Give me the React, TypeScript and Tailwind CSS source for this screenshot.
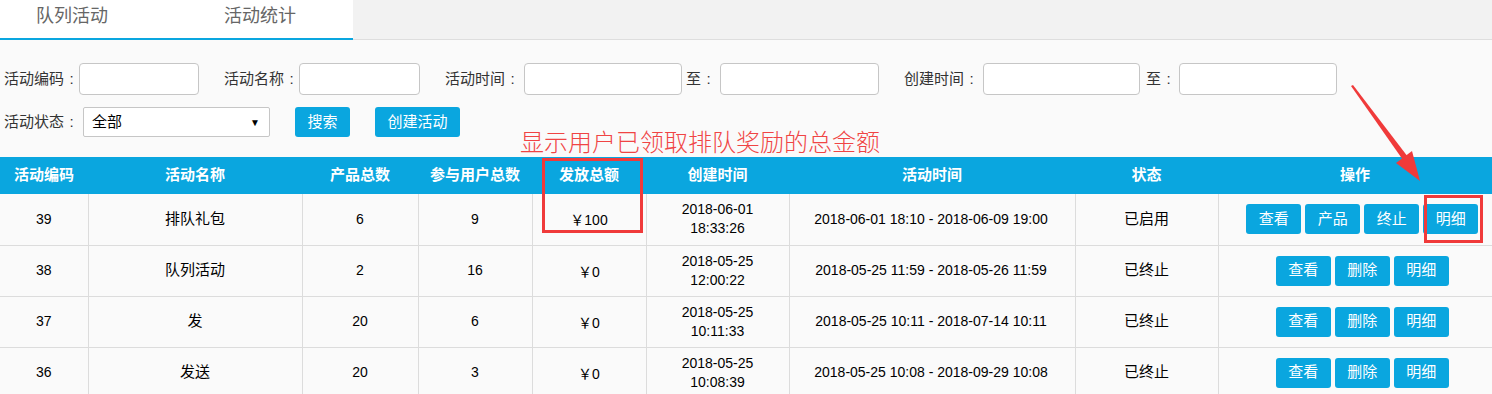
import React from "react";

const rows = [
  {
    id: "39",
    name: "排队礼包",
    products: "6",
    users: "9",
    amount: "￥100",
    createdDate: "2018-06-01",
    createdTime: "18:33:26",
    range: "2018-06-01 18:10 - 2018-06-09 19:00",
    status: "已启用",
    actions: ["查看", "产品", "终止", "明细"],
  },
  {
    id: "38",
    name: "队列活动",
    products: "2",
    users: "16",
    amount: "￥0",
    createdDate: "2018-05-25",
    createdTime: "12:00:22",
    range: "2018-05-25 11:59 - 2018-05-26 11:59",
    status: "已终止",
    actions: ["查看", "删除", "明细"],
  },
  {
    id: "37",
    name: "发",
    products: "20",
    users: "6",
    amount: "￥0",
    createdDate: "2018-05-25",
    createdTime: "10:11:33",
    range: "2018-05-25 10:11 - 2018-07-14 10:11",
    status: "已终止",
    actions: ["查看", "删除", "明细"],
  },
  {
    id: "36",
    name: "发送",
    products: "20",
    users: "3",
    amount: "￥0",
    createdDate: "2018-05-25",
    createdTime: "10:08:39",
    range: "2018-05-25 10:08 - 2018-09-29 10:08",
    status: "已终止",
    actions: ["查看", "删除", "明细"],
  },
];

const headers = ["活动编码", "活动名称", "产品总数", "参与用户总数", "发放总额", "创建时间", "活动时间", "状态", "操作"];
const widths = [88, 214, 116, 114, 114, 143, 286, 143, 274];

// label text plus a centred full-width style colon
function Label({ text }: { text: string }) {
  return (
    <span className="text-[15px] text-[#333] whitespace-nowrap">
      {text}
      <span className="inline-block w-[15px] text-center">:</span>
    </span>
  );
}

function Input({ w }: { w: string }) {
  return <div className={`${w} h-[32px] bg-white border border-[#c6c6c6] rounded-[4px]`}></div>;
}

function Btn({ children, w }: { children: React.ReactNode; w: string }) {
  return (
    <button className={`${w} h-[30px] bg-[#0aa6df] text-white text-[15px] rounded-[3px] flex items-center justify-center`}>
      {children}
    </button>
  );
}

export default function App() {
  return (
    <div
      className="relative w-[1492px] h-[394px] overflow-hidden bg-[#fafafa]"
      style={{ fontFamily: '"Liberation Sans", "Noto Sans CJK SC", sans-serif' }}
    >
      {/* TABS */}
      <div className="flex h-[40px] bg-[#f2f2f2] border-b border-[#dedede]">
        <div className="flex w-[353px] h-[40px] bg-white border-b-2 border-[#0aa6df] text-[18px] text-[#666]">
          <div className="pl-[36px] pt-[3px]">队列活动</div>
          <div className="pl-[116px] pt-[3px]">活动统计</div>
        </div>
      </div>

      {/* FILTERS */}
      <div className="pt-[23px] pl-[4px]">
        <div className="flex items-center h-[32px]">
          <Label text="活动编码" />
          <Input w="w-[120px]" />
          <div className="ml-[25px]">
            <Label text="活动名称" />
          </div>
          <Input w="w-[121px]" />
          <div className="ml-[25px] mr-[4px]">
            <Label text="活动时间" />
          </div>
          <Input w="w-[158px]" />
          <div className="ml-[4px] mr-[4px]">
            <Label text="至" />
          </div>
          <Input w="w-[159px]" />
          <div className="ml-[25px] mr-[4px]">
            <Label text="创建时间" />
          </div>
          <Input w="w-[157px]" />
          <div className="ml-[6px] mr-[3px]">
            <Label text="至" />
          </div>
          <Input w="w-[158px]" />
        </div>

        <div className="flex items-center h-[30px] mt-[12px]">
          <Label text="活动状态" />
          <div className="ml-[4px] w-[187px] h-[30px] bg-white border border-[#c6c6c6] rounded-[2px] flex items-center justify-between pl-[8px] pr-[9px]">
            <span className="text-[15px] text-black">全部</span>
            <span className="text-[10px] text-black">▼</span>
          </div>
          <div className="ml-[25px]">
            <Btn w="w-[55px]">搜索</Btn>
          </div>
          <div className="ml-[25px]">
            <Btn w="w-[85px]">创建活动</Btn>
          </div>
        </div>
      </div>

      {/* TABLE */}
      <table className="mt-[20px] border-collapse table-fixed w-[1492px]">
        <colgroup>
          {widths.map((w, i) => (
            <col key={i} style={{ width: w }} />
          ))}
        </colgroup>
        <thead>
          <tr className="h-[37px] bg-[#0aa6df]">
            {headers.map((h) => (
              <th key={h} className="text-white text-[15px] font-bold text-center p-0">
                {h}
              </th>
            ))}
          </tr>
        </thead>
        <tbody>
          {rows.map((r) => (
            <tr key={r.id} className="h-[51px] border-b border-[#dcdcdc] text-black text-center">
              <td className="border-r border-[#dcdcdc] text-[14px]">{r.id}</td>
              <td className="border-r border-[#dcdcdc] text-[15px]">{r.name}</td>
              <td className="border-r border-[#dcdcdc] text-[14px]">{r.products}</td>
              <td className="border-r border-[#dcdcdc] text-[14px]">{r.users}</td>
              <td className="border-r border-[#dcdcdc] text-[14px] pt-[3px]">{r.amount}</td>
              <td className="border-r border-[#dcdcdc] text-[14px] leading-[19px]">
                <div>{r.createdDate}</div>
                <div>{r.createdTime}</div>
              </td>
              <td className="border-r border-[#dcdcdc] text-[14px] pr-[2px]">{r.range}</td>
              <td className="border-r border-[#dcdcdc] text-[15px]">{r.status}</td>
              <td className="pl-[14px]">
                <div className="flex justify-center gap-[4px]">
                  {r.actions.map((a) => (
                    <Btn key={a} w="w-[55px]">
                      {a}
                    </Btn>
                  ))}
                </div>
              </td>
            </tr>
          ))}
        </tbody>
      </table>

      {/* ANNOTATIONS */}
      <div className="absolute left-[520px] top-[128px] text-[24px] leading-[30px] font-light text-[#f04444] whitespace-nowrap">
        显示用户已领取排队奖励的总金额
      </div>
      <div className="absolute left-[542px] top-[158px] w-[101px] h-[75px] border-[3px] border-[#f03a3a]"></div>
      <div className="absolute left-[1424px] top-[195px] w-[59px] h-[48px] border-[3px] border-[#f03a3a]"></div>
      <svg className="absolute left-0 top-0 pointer-events-none" width="1492" height="394">
        <polygon points="1351,86 1353,85 1408,157 1403,160" fill="#f03a3a" />
        <polygon points="1420,181 1396,163 1412,151" fill="#f03a3a" />
      </svg>
    </div>
  );
}
